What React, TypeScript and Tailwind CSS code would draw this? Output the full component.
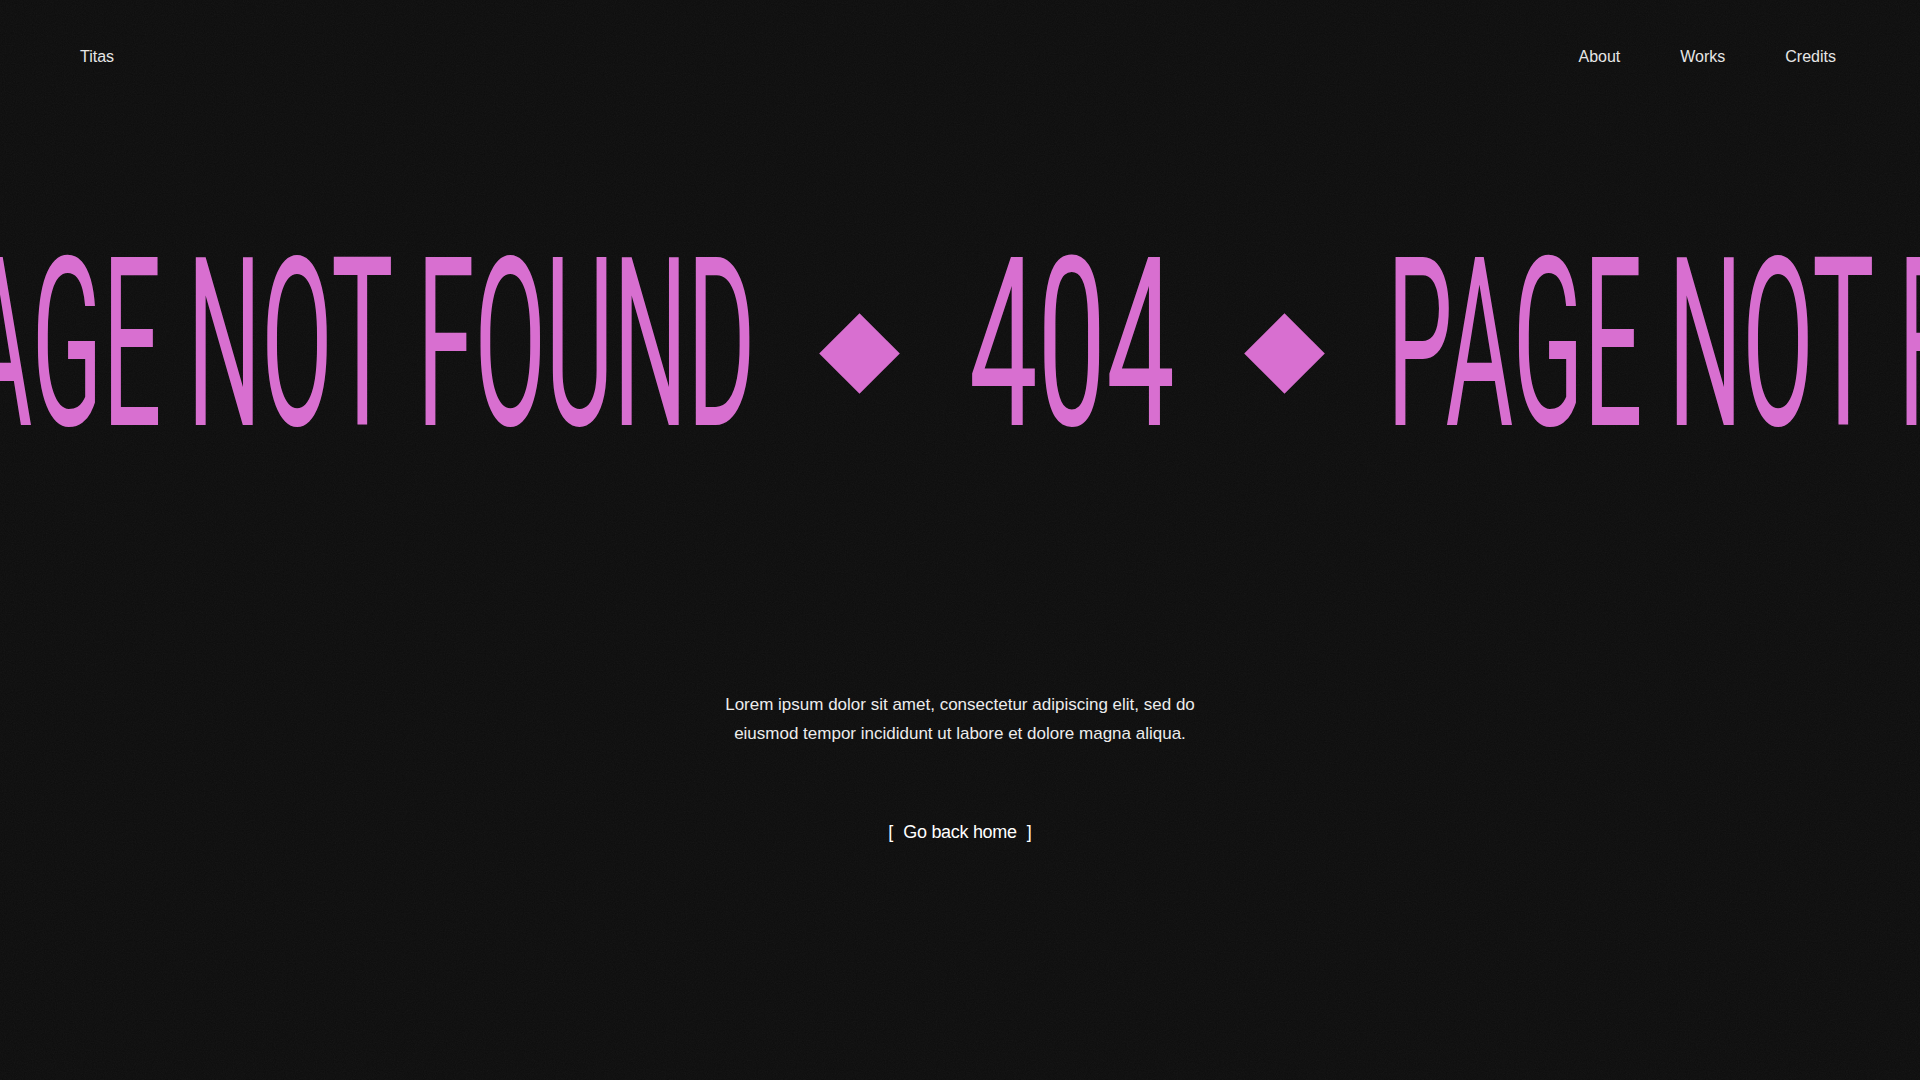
import React from "react";

function Diamond({ className = "" }: { className?: string }) {
  return (
    <div className={`mt-[16px] flex h-[81px] w-[81px] shrink-0 items-center justify-center ${className}`}>
      <div className="h-[57px] w-[57px] rotate-45 bg-[#d86fd0]" />
    </div>
  );
}

function Headline() {
  return (
    <div className="h-[236px] w-[849px] shrink-0">
      <span className="inline-block origin-left scale-x-[0.44] whitespace-nowrap font-['Roboto'] text-[236px] font-normal leading-none text-[#d86fd0]">
        PAGE NOT FOUND
      </span>
    </div>
  );
}

function Code() {
  return (
    <div className="ml-[69px] h-[236px] w-[207px] shrink-0">
      <span className="inline-block origin-left scale-x-[0.517] whitespace-nowrap font-['Roboto'] text-[236px] font-normal leading-none text-[#d86fd0]">
        404
      </span>
    </div>
  );
}

function Marquee() {
  const loops = [0, 1, 2];
  return (
    <div className="w-full overflow-hidden">
      <div className="ml-[-94px] flex items-center whitespace-nowrap">
        {loops.map((i) => (
          <div key={i} className={`flex shrink-0 items-center ${i > 0 ? "ml-[62px]" : ""}`}>
            <Headline />
            <Diamond className="ml-[64px]" />
            <Code />
            <Diamond className="ml-[68px]" />
          </div>
        ))}
      </div>
    </div>
  );
}

export default function App() {
  return (
    <div className="relative min-h-screen w-full overflow-hidden bg-[#0d0d0d] font-['Liberation_Sans',Arial,sans-serif] text-[#e8e8e8]">
      <svg className="pointer-events-none absolute inset-0 h-full w-full opacity-[0.05]" aria-hidden>
        <filter id="grain">
          <feTurbulence type="fractalNoise" baseFrequency="0.9" numOctaves="2" stitchTiles="stitch" />
          <feColorMatrix type="saturate" values="0" />
        </filter>
        <rect width="100%" height="100%" filter="url(#grain)" />
      </svg>

      <div className="relative">
        {/* Header */}
        <header className="flex items-center justify-between pl-[80px] pr-[84px] pt-[45px] text-[16px] leading-[24px]">
          <a href="#" className="text-[#e6e6e6]">Titas</a>
          <nav className="flex items-center gap-[60px] text-[#e6e6e6]">
            <a href="#">About</a>
            <a href="#">Works</a>
            <a href="#">Credits</a>
          </nav>
        </header>

        {/* Headline strip */}
        <div className="mt-[158px]">
          <Marquee />
        </div>

        {/* Copy */}
        <p className="mx-auto mt-[227px] w-[520px] text-center text-[17px] leading-[29px] text-[#ececec]">
          Lorem ipsum dolor sit amet, consectetur adipiscing elit, sed do eiusmod tempor incididunt ut labore et dolore magna aliqua.
        </p>

        <div className="mt-[70px] flex justify-center">
          <a href="#" className="flex items-center gap-[10px] text-[18px] font-medium leading-[28px] text-white">
            <span>[</span>
            <span className="tracking-[-0.3px]">Go back home</span>
            <span>]</span>
          </a>
        </div>
      </div>
    </div>
  );
}
